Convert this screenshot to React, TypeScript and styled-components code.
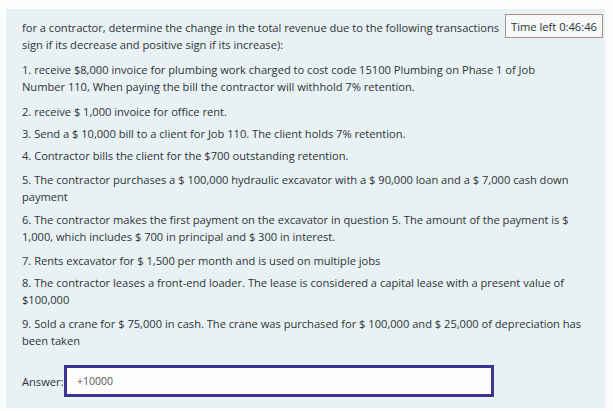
import React from "react";
import styled, { createGlobalStyle } from "styled-components";

const Global = createGlobalStyle`
  html, body { margin: 0; padding: 0; background: #fbfcfc; }
  body { font-family: "Open Sans", "Noto Sans", sans-serif; }
`;

const Page = styled.div`
  width: 613px;
  height: 411px;
  padding: 9px 8px 3px 6px;
  box-sizing: border-box;
`;

const Panel = styled.div`
  position: relative;
  background: #e8f2f4;
  height: 100%;
  padding: 10px 12px 0 16px;
  box-sizing: border-box;
  color: #2e3336;
  font-size: 11.15px;
  letter-spacing: -0.02px;
`;

const Para = styled.p<{ $gap?: number }>`
  margin: 0 0 ${(p) => p.$gap ?? 5}px 0;
  line-height: 17px;
  white-space: nowrap;
`;

const Timer = styled.div`
  position: absolute;
  top: 5px;
  right: 2px;
  width: 98px;
  height: 24px;
  box-sizing: border-box;
  border: 1px solid #b08e8c;
  background: #f7f9f9;
  display: flex;
  align-items: center;
  justify-content: center;
  font-size: 11.2px;
  color: #2e3336;
  white-space: nowrap;
`;

const AnswerRow = styled.div`
  display: flex;
  align-items: center;
  margin-top: 16px;
`;

const Label = styled.span`
  width: 42px;
`;

const Input = styled.div`
  width: 430px;
  height: 32px;
  box-sizing: border-box;
  border: 3px solid #3b3790;
  background: #fffdfc;
  display: flex;
  align-items: center;
  padding-left: 10px;
  color: #555;
  font-size: 10.5px;
`;

export default function App() {
  return (
    <>
      <Global />
      <Page>
        <Panel>
          <Timer>Time left 0:46:46</Timer>
          <Para $gap={8}>
            for a contractor, determine the change in the total revenue due to the following transactions
            <br />
            sign if its decrease and positive sign if its increase):
          </Para>
          <Para $gap={8}>
            1. receive $8,000 invoice for plumbing work charged to cost code 15100 Plumbing on Phase 1 of Job
            <br />
            Number 110, When paying the bill the contractor will withhold 7% retention.
          </Para>
          <Para>2. receive $ 1,000 invoice for office rent.</Para>
          <Para>3. Send a $ 10,000 bill to a client for Job 110. The client holds 7% retention.</Para>
          <Para $gap={7}>4. Contractor bills the client for the $700 outstanding retention.</Para>
          <Para $gap={6}>
            5. The contractor purchases a $ 100,000 hydraulic excavator with a $ 90,000 loan and a $ 7,000 cash down
            <br />
            payment
          </Para>
          <Para $gap={7}>
            6. The contractor makes the first payment on the excavator in question 5. The amount of the payment is $
            <br />
            1,000, which includes $ 700 in principal and $ 300 in interest.
          </Para>
          <Para>7. Rents excavator for $ 1,500 per month and is used on multiple jobs</Para>
          <Para $gap={7}>
            8. The contractor leases a front-end loader. The lease is considered a capital lease with a present value of
            <br />
            $100,000
          </Para>
          <Para>
            9. Sold a crane for $ 75,000 in cash. The crane was purchased for $ 100,000 and $ 25,000 of depreciation has
            <br />
            been taken
          </Para>
          <AnswerRow>
            <Label>Answer:</Label>
            <Input>+10000</Input>
          </AnswerRow>
        </Panel>
      </Page>
    </>
  );
}
